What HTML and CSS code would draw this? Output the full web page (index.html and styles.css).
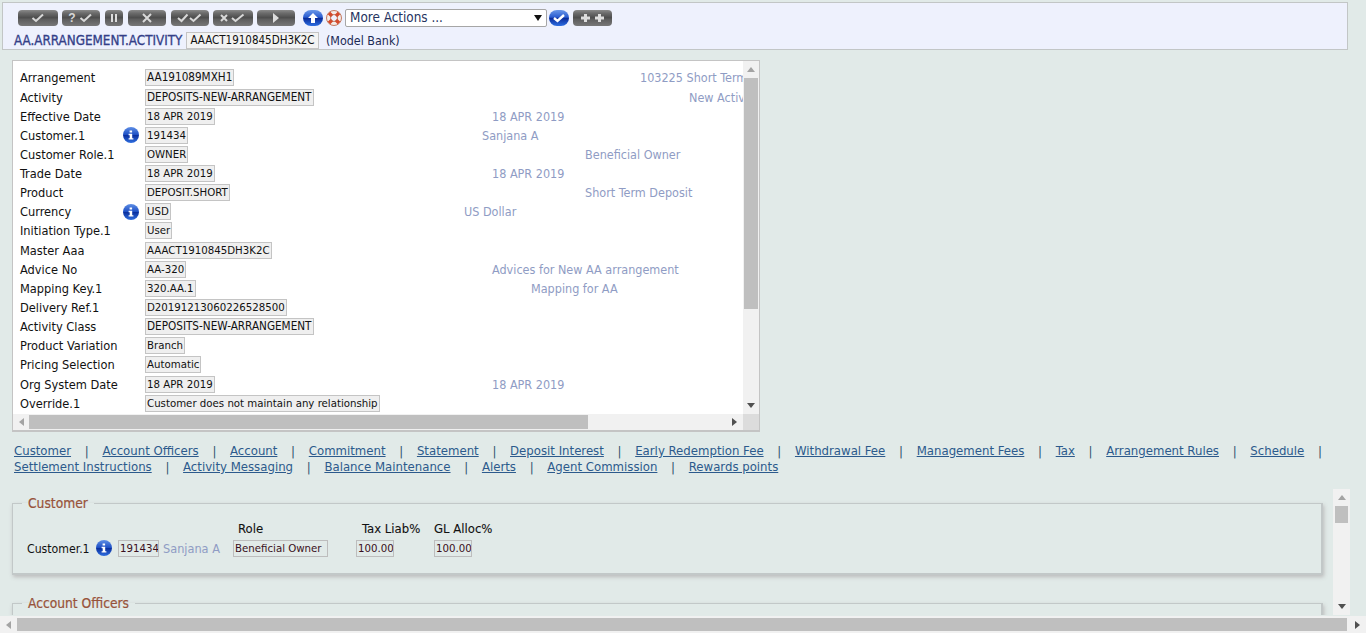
FILE: index.html
```html
<!DOCTYPE html>
<html lang="en">
<head>
<meta charset="utf-8">
<title>AA.ARRANGEMENT.ACTIVITY</title>
<link rel="stylesheet" href="styles.css">
</head>
<body>
<svg class="defs" width="0" height="0" aria-hidden="true">
  <defs>
    <linearGradient id="blue" x1="0" y1="0" x2="0" y2="1">
      <stop offset="0" stop-color="#5f8fe6"/><stop offset=".48" stop-color="#1d4fc4"/><stop offset=".52" stop-color="#0a2f9e"/><stop offset="1" stop-color="#2f6fe0"/>
    </linearGradient>
    <symbol id="info" viewBox="0 0 16 16">
      <circle cx="8" cy="8" r="8" fill="url(#blue)"/>
      <path d="M6.600 3.400h2.500v2.200H6.600zM5.600 6.800h3.600v4.400h1.200v1.400H5.600v-1.400h1.100V8.200H5.600z" fill="#fff"/>
    </symbol>
  </defs>
</svg>
<div class="page">
  <header class="toolbar">
    <div class="tools">
      <button class="btn w40"><svg width="16" height="10" viewBox="0 0 16 10"><path class="glyph" d="M2.500 5l3.500 3 7-6.500"/></svg></button>
      <button class="btn w38"><span class="q">?</span><svg width="16" height="10" viewBox="0 0 16 10"><path class="glyph" d="M2.500 5l3.500 3 7-6.500"/></svg></button>
      <button class="btn w18 ml5"><svg width="8" height="10" viewBox="0 0 8 10"><path class="fill" d="M1 1h2v8H1zM5 1h2v8H5z"/></svg></button>
      <button class="btn w38 ml5"><svg width="12" height="10" viewBox="0 0 12 10"><path class="glyph" d="M2 1l8 8M10 1l-8 8"/></svg></button>
      <button class="btn w38 ml5"><svg width="26" height="10" viewBox="0 0 26 10"><path class="glyph" d="M1 5l3.500 3 6-6.500M13 5l3.500 3 7-6.500"/></svg></button>
      <button class="btn w40b"><svg width="28" height="10" viewBox="0 0 28 10"><path class="glyph" d="M2 2l6 6M8 2l-6 6M13 5l3.500 3 8-6.500"/></svg></button>
      <button class="btn w38"><svg width="8" height="10" viewBox="0 0 8 10"><path class="fill" d="M1 0l6 5-6 5z"/></svg></button>
      <button class="round up"><svg width="12" height="10" viewBox="0 0 12 10"><path class="fill" d="M6 0l5 5H8v5H4V5H1z"/></svg></button>
      <svg class="buoy" width="16" height="16" viewBox="0 0 16 16"><circle cx="8" cy="8" r="5.700" fill="none" stroke="#f3ece8" stroke-width="4.200"/><path d="M3 3l3 3M13 3l-3 3M3 13l3-3M13 13l-3-3" stroke="#d8482a" stroke-width="3.500"/><circle cx="8" cy="8" r="7.500" fill="none" stroke="#b95a3c" stroke-width=".8"/><circle cx="8" cy="8" r="3.500" fill="none" stroke="#b95a3c" stroke-width=".8"/></svg>
      <div class="select"><span>More Actions ...</span><i class="caret"></i></div>
      <button class="round go"><svg width="14" height="10" viewBox="0 0 14 10"><path class="glyph wide" d="M2 5l3.500 3 6.500-6"/></svg></button>
      <button class="btn ml4"><svg width="26" height="10" viewBox="0 0 26 10"><path class="fill" d="M4 1h3v2.500h3v3H7V9H4V6.500H1v-3h3zM18 1h3v2.500h3v3h-3V9h-3V6.500h-3v-3h3z"/></svg></button>
    </div>
    <div class="idline">
      <strong class="app">AA.ARRANGEMENT.ACTIVITY</strong>
      <span class="idbox">AAACT1910845DH3K2C</span>
      <span class="bank">(Model Bank)</span>
    </div>
  </header>

  <section class="panel">
    <div class="panel-view">
      <div class="row"><span class="lbl">Arrangement</span><span class="ico"></span><span class="cell"><span class="val caps">AA191089MXH1</span></span><span class="desc d176">103225 Short Term Deposit</span></div>
      <div class="row"><span class="lbl">Activity</span><span class="ico"></span><span class="cell"><span class="val caps">DEPOSITS-NEW-ARRANGEMENT</span></span><span class="desc d225">New Activity</span></div>
      <div class="row"><span class="lbl">Effective Date</span><span class="ico"></span><span class="cell"><span class="val">18 APR 2019</span></span><span class="desc d28">18 APR 2019</span></div>
      <div class="row"><span class="lbl">Customer.1</span><span class="ico"><svg width="16" height="16"><use href="#info"/></svg></span><span class="cell"><span class="val">191434</span></span><span class="desc d18">Sanjana A</span></div>
      <div class="row"><span class="lbl">Customer Role.1</span><span class="ico"></span><span class="cell"><span class="val">OWNER</span></span><span class="desc d121">Beneficial Owner</span></div>
      <div class="row"><span class="lbl">Trade Date</span><span class="ico"></span><span class="cell"><span class="val">18 APR 2019</span></span><span class="desc d28">18 APR 2019</span></div>
      <div class="row"><span class="lbl">Product</span><span class="ico"></span><span class="cell"><span class="val">DEPOSIT.SHORT</span></span><span class="desc d121">Short Term Deposit</span></div>
      <div class="row"><span class="lbl">Currency</span><span class="ico"><svg width="16" height="16"><use href="#info"/></svg></span><span class="cell"><span class="val">USD</span></span><span class="desc d0">US Dollar</span></div>
      <div class="row"><span class="lbl">Initiation Type.1</span><span class="ico"></span><span class="cell"><span class="val">User</span></span></div>
      <div class="row"><span class="lbl">Master Aaa</span><span class="ico"></span><span class="cell"><span class="val">AAACT1910845DH3K2C</span></span></div>
      <div class="row"><span class="lbl">Advice No</span><span class="ico"></span><span class="cell"><span class="val">AA-320</span></span><span class="desc d28">Advices for New AA arrangement</span></div>
      <div class="row"><span class="lbl">Mapping Key.1</span><span class="ico"></span><span class="cell"><span class="val">320.AA.1</span></span><span class="desc d67">Mapping for AA</span></div>
      <div class="row"><span class="lbl">Delivery Ref.1</span><span class="ico"></span><span class="cell"><span class="val">D20191213060226528500</span></span></div>
      <div class="row"><span class="lbl">Activity Class</span><span class="ico"></span><span class="cell"><span class="val caps">DEPOSITS-NEW-ARRANGEMENT</span></span></div>
      <div class="row"><span class="lbl">Product Variation</span><span class="ico"></span><span class="cell"><span class="val">Branch</span></span></div>
      <div class="row"><span class="lbl">Pricing Selection</span><span class="ico"></span><span class="cell"><span class="val">Automatic</span></span></div>
      <div class="row"><span class="lbl">Org System Date</span><span class="ico"></span><span class="cell"><span class="val">18 APR 2019</span></span><span class="desc d28">18 APR 2019</span></div>
      <div class="row"><span class="lbl">Override.1</span><span class="ico"></span><span class="cell"><span class="val">Customer does not maintain any relationship</span></span></div>
      <div class="row"><span class="lbl"></span><span class="ico"></span><span class="cell"><span class="val long">&nbsp;</span></span></div>
    </div>
    <div class="vbar">
      <i class="arr a-up dim"></i><div class="vtrack"><div class="vthumb"></div></div><i class="arr a-down"></i>
    </div>
    <div class="hbar">
      <i class="arr a-left dim"></i><div class="htrack"><div class="hthumb"></div></div><i class="arr a-right"></i>
    </div>
    <div class="corner"></div>
  </section>

  <nav class="tabs">
    <a href="#">Customer</a><b>|</b><a href="#">Account Officers</a><b>|</b><a href="#">Account</a><b>|</b><a href="#">Commitment</a><b>|</b><a href="#">Statement</a><b>|</b><a href="#">Deposit Interest</a><b>|</b><a href="#">Early Redemption Fee</a><b>|</b><a href="#">Withdrawal Fee</a><b>|</b><a href="#">Management Fees</a><b>|</b><a href="#">Tax</a><b>|</b><a href="#">Arrangement Rules</a><b>|</b><a href="#">Schedule</a><b>|</b><br>
    <a href="#">Settlement Instructions</a><b>|</b><a href="#">Activity Messaging</a><b>|</b><a href="#">Balance Maintenance</a><b>|</b><a href="#">Alerts</a><b>|</b><a href="#">Agent Commission</a><b>|</b><a href="#">Rewards points</a>
  </nav>

  <section class="lower">
    <div class="lower-view">
      <fieldset class="fs">
        <legend>Customer</legend>
        <div class="cust">
          <span class="h h-role">Role</span><span class="h h-tax">Tax Liab%</span><span class="h h-gl">GL Alloc%</span>
          <span class="c-lbl">Customer.1</span>
          <svg class="c-ico" width="16" height="16"><use href="#info"/></svg>
          <span class="inp c-id">191434</span>
          <span class="c-name">Sanjana A</span>
          <span class="inp c-role">Beneficial Owner</span>
          <span class="inp c-tax">100.00</span>
          <span class="inp c-gl">100.00</span>
        </div>
      </fieldset>
      <fieldset class="fs fs2">
        <legend>Account Officers</legend>
      </fieldset>
    </div>
    <div class="vbar lowbar">
      <i class="arr a-up dim"></i><div class="vtrack"><div class="vthumb small"></div></div><i class="arr a-down"></i>
    </div>
  </section>
</div>
<div class="pagebar">
  <i class="arr a-left dim"></i><div class="htrack"><div class="pagethumb"></div></div><i class="arr a-right"></i>
</div>
</body>
</html>
```
FILE: styles.css
```css
* { box-sizing: border-box; }
html, body { height: 633px; overflow: hidden; }
body {
  margin: 0;
  background: #e1eae8;
  font: 12.700px/15px "DejaVu Sans Condensed", "DejaVu Sans", sans-serif;
  color: #111;
  display: flex;
  flex-direction: column;
}
.defs { position: absolute; }
.page { height: 616px; overflow: hidden; flex: none; }

/* toolbar */
.toolbar {
  margin: 2px 18px 0 2px;
  height: 48px;
  background: #eef1fd;
  border: 1px solid #c2c6c6;
  padding: 5px 0 0 11px;
}
.tools { display: flex; align-items: center; height: 20px; margin-left: 4px; }
button { border: 0; padding: 0; margin: 0; display: flex; align-items: center; justify-content: center; gap: 2px; }
.btn {
  height: 16px;
  border-radius: 4px;
  background: linear-gradient(#8a8a8a 0, #6b6b6b 20%, #4b4b4b 50%, #5b5b5b 55%, #777 100%);
  margin-right: 4px;
}
.w40 { width: 40px; }
.w38 { width: 38px; }
.w40b { width: 40px; margin-left: 0; margin-right: 4px; }
.w18 { width: 18px; }
.ml5 { margin-left: 1px; }
.ml4 { margin: 0; width: 39px; }
.q { color: #d8d8d8; font: bold 12px/12px "Liberation Sans", sans-serif; }
.glyph { fill: none; stroke: #d9d9d9; stroke-width: 2; }
.glyph.wide { stroke: #fff; stroke-width: 2.400; }
.fill { fill: #ddd; }
.round {
  width: 20px; height: 16px; border-radius: 8px;
  background: linear-gradient(#6a97e8 0, #2a5cd0 45%, #0a2c9a 52%, #2d6ee2 100%);
}
.up { margin-left: 4px; }
.up .fill { fill: #fff; }
.go { margin-left: 2px; margin-right: 4px; }
.buoy { margin-left: 3px; flex: none; }
.select {
  width: 202px; height: 18px; margin-left: 3px;
  background: #fff; border: 1px solid #a6a6a6; border-radius: 2px;
  color: #26335f; font-size: 13.400px; line-height: 16px;
  padding-left: 4px; padding-right: 4px;
  display: flex; justify-content: space-between; align-items: center;
}
.caret { width: 0; height: 0; border: 4px solid transparent; border-top: 6px solid #111; border-bottom: 0; }
.idline { display: flex; align-items: center; height: 18px; margin-top: 3px; }
.app { color: #343f88; font-size: 13.300px; font-weight: normal; -webkit-text-stroke: .3px #343f88; width: 172px; white-space: nowrap; }
.idbox { background: #f3f3f3; border: 1px solid #c4c4c4; height: 17px; line-height: 15px; font-size: 11.500px; text-align: center; width: 133px; white-space: nowrap; overflow: hidden; }
.bank { margin-left: 7px; color: #1c2a55; font-size: 12.400px; }

/* upper panel */
.panel {
  margin: 10px 0 0 12px;
  width: 748px; height: 372px;
  border: 2px solid #c4c4c4;
  border-width: 1px 2px 2px 1px;
  background: #fff;
  display: grid;
  grid-template-columns: 730px 16px;
  grid-template-rows: 353px 16px;
}
.panel-view { overflow: hidden; padding: 7.300px 0 0 7px; }
.row {
  display: grid;
  grid-template-columns: 103px 22px 319px 1fr;
  height: 19.150px;
  align-items: center;
  white-space: nowrap;
}
.ico { display: flex; align-items: center; justify-content: flex-start; }
.cell { display: flex; }
.val {
  background: #efefef; border: 1px solid #c4c4c4;
  height: 17px; line-height: 15px; padding: 0 1px;
  font-size: 11.350px;
  color: #111;
}
.val.caps { font-size: 11.650px; }
.val.long { width: 377px; }
.desc { color: #8f9cc4; font-size: 12.500px; }
.d0 { margin-left: 0; } .d18 { margin-left: 18px; } .d28 { margin-left: 28px; }
.d67 { margin-left: 67px; } .d121 { margin-left: 121px; } .d176 { margin-left: 176px; } .d225 { margin-left: 225px; }

.vbar { background: #f1f1f1; display: flex; flex-direction: column; align-items: center; }
.hbar { background: #f1f1f1; display: flex; align-items: center; grid-column: 1; }
.corner { background: #dcdcdc; }
.vtrack { flex: 1; width: 100%; padding: 0 1px; }
.htrack { flex: 1; height: 100%; padding: 1px 0; }
.vthumb { width: 100%; height: 231px; background: #bfbfbf; }
.hthumb { width: 559px; height: 14px; background: #bfbfbf; }
.arr { flex: none; display: block; width: 0; height: 0; border: 0 solid transparent; }
.vbar .arr { margin: 6px 0; }
.a-up { border-width: 0 4px 5px; border-bottom-color: #505050; }
.a-down { border-width: 5px 4px 0; border-top-color: #505050; }
.a-left { border-width: 4px 5px 4px 0; border-right-color: #505050; margin: 0 5px 0 6px; }
.a-right { border-width: 4px 0 4px 5px; border-left-color: #505050; margin: 0 6px 0 5px; }
.a-up.dim { border-bottom-color: #a3a3a3; }
.a-left.dim { border-right-color: #a3a3a3; }

/* links */
.tabs { margin: 11px 0 0 14px; line-height: 16px; font-size: 13.050px; white-space: nowrap; height: 32px; }
.tabs a { color: #2c5a8c; text-decoration: underline; }
.tabs b { font-weight: normal; color: #30556f; margin: 0 13.700px; }

/* lower */
.lower { display: flex; margin-top: 14px; height: 126px; width: 1350px; }
.lower-view { width: 1333px; padding: 7px 10px 0 12px; overflow: hidden; }
.lowbar { width: 17px; flex: none; }
.lowbar .vtrack { padding: 0 2px; }
.vthumb.small { height: 17px; width: 100%; }
.fs {
  margin: 0;
  padding: 0;
  height: 79px;
  border: 2px solid #c2c8c8;
  border-width: 1px 2px 2px 1px;
  box-shadow: 1px 2px 4px #bbb;
  min-width: 0;
}
.fs legend { color: #98533a; font-size: 13.700px; line-height: 15px; margin-left: 9px; padding: 0 6px; -webkit-text-stroke: .2px #98533a; }
.fs2 { margin-top: 21px; height: 60px; }
.cust {
  display: grid;
  grid-template-columns: 69px 22px 45px 70px 123px 78px 60px;
  grid-template-rows: 20px 20px;
  padding: 7px 0 0 14px;
  align-items: center;
  white-space: nowrap;
}
.h { color: #111; font-size: 13px; -webkit-text-stroke: .1px #111; }
.h-role { grid-column: 5; margin-left: 5px; }
.h-tax { grid-column: 6; margin-left: 6px; }
.h-gl { grid-column: 7; }
.c-lbl { grid-row: 2; grid-column: 1; font-size: 12.200px; margin-top: 2px; }
.c-ico { grid-row: 2; grid-column: 2; }
.c-id { grid-row: 2; grid-column: 3; width: 41px; }
.c-name { grid-row: 2; grid-column: 4; color: #8f9cc4; font-size: 12.600px; }
.c-role { grid-row: 2; grid-column: 5; width: 95px; padding: 0 4px; color: #111; font-size: 11.900px; }
.c-tax { grid-row: 2; grid-column: 6; width: 38px; }
.c-gl { grid-row: 2; grid-column: 7; width: 38px; }
.inp { border: 1px solid #bdbdbd; height: 17px; line-height: 15px; padding: 0 1px; font-size: 11.350px; color: #3a1020; overflow: hidden; }

.pagebar { height: 17px; flex: none; background: #f1f1f1; display: flex; align-items: center; }
.pagebar .a-left { margin-right: 6px; }
.pagebar .htrack { padding: 2px 0; }
.pagethumb { width: 1330px; height: 13px; background: #bfbfbf; }
```
